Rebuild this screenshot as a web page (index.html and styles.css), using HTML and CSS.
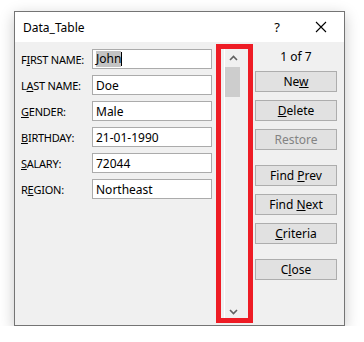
FILE: index.html
```html
<!DOCTYPE html>
<html lang="en">
<head>
  <meta charset="UTF-8" />
  <title>Data_Table</title>
  <link rel="stylesheet" href="styles.css">
</head>
<body>
  <div class="dialog">
    <header class="titlebar">
      <span class="title">Data_Table</span>
      <span class="help">?</span>
      <svg class="close-x" width="12" height="12" viewBox="0 0 12 12">
        <path d="M1 1 L11 11 M11 1 L1 11" stroke="#000" stroke-width="1.1" fill="none"/>
      </svg>
    </header>

    <section class="form-body">
      <div class="fields">
        <div class="field-row">
          <label>F<u>I</u>RST NAME:</label>
          <div class="textbox"><span class="selected">John</span><span class="caret"></span></div>
        </div>
        <div class="field-row">
          <label>L<u>A</u>ST NAME:</label>
          <div class="textbox">Doe</div>
        </div>
        <div class="field-row">
          <label><u>G</u>ENDER:</label>
          <div class="textbox">Male</div>
        </div>
        <div class="field-row">
          <label><u>B</u>IRTHDAY:</label>
          <div class="textbox">21-01-1990</div>
        </div>
        <div class="field-row">
          <label><u>S</u>ALARY:</label>
          <div class="textbox">72044</div>
        </div>
        <div class="field-row">
          <label>R<u>E</u>GION:</label>
          <div class="textbox">Northeast</div>
        </div>
      </div>

      <div class="scroll-mark">
        <div class="scrollbar">
          <svg class="arrow arrow-up" width="9" height="6" viewBox="0 0 9 6">
            <path d="M1 5 L4.5 1.5 L8 5" stroke="#606060" stroke-width="1.6" fill="none"/>
          </svg>
          <div class="thumb"></div>
          <svg class="arrow arrow-down" width="9" height="6" viewBox="0 0 9 6">
            <path d="M1 1 L4.5 4.5 L8 1" stroke="#606060" stroke-width="1.6" fill="none"/>
          </svg>
        </div>
      </div>

      <div class="actions">
        <div class="record-count">1 of 7</div>
        <button>Ne<u>w</u></button>
        <button><u>D</u>elete</button>
        <button class="disabled">Restore</button>
        <button class="group-start">Find <u>P</u>rev</button>
        <button>Find <u>N</u>ext</button>
        <button><u>C</u>riteria</button>
        <button class="group-start">C<u>l</u>ose</button>
      </div>
    </section>
  </div>
</body>
</html>
```

FILE: styles.css
```css
body {
  margin: 0;
  background: #fff;
  font-family: 'Noto Sans', 'Segoe UI', sans-serif;
  font-size: 12px;
  color: #000;
}

.dialog {
  margin: 11px 0 0 14px;
  width: 331px;
  height: 315px;
  box-sizing: border-box;
  border: 1px solid #747474;
  background: #f0f0f0;
  box-shadow: 0 4px 14px rgba(0, 0, 0, 0.22);
  display: flex;
  flex-direction: column;
}

.titlebar {
  height: 30px;
  background: #fff;
  display: flex;
  align-items: center;
  padding-left: 8px;
}

.title {
  flex: 1;
  font-size: 12px;
}

.help {
  font-size: 13px;
  margin-right: 35px;
}

.close-x {
  margin-right: 17px;
}

.form-body {
  flex: 1;
  display: flex;
  align-items: flex-start;
}

.fields {
  width: 201px;
  padding: 7px 0 0 6px;
  box-sizing: border-box;
  display: flex;
  flex-direction: column;
  gap: 6px;
}

.field-row {
  display: flex;
  align-items: center;
  height: 20px;
}

.field-row label {
  width: 71px;
  flex-shrink: 0;
  white-space: nowrap;
  font-size: 11px;
  letter-spacing: -0.25px;
}

.textbox {
  width: 120px;
  height: 20px;
  box-sizing: border-box;
  border: 1px solid #ababab;
  background: #fff;
  padding-left: 3px;
  display: flex;
  align-items: center;
}

.selected {
  background: #c4c4c4;
  line-height: 16px;
}

.caret {
  width: 1px;
  height: 14px;
  background: #000;
}

.scroll-mark {
  margin-top: 2px;
  width: 37px;
  height: 279px;
  box-sizing: border-box;
  border: 5px solid #ee1c25;
  padding-left: 3px;
}

.scrollbar {
  width: 17px;
  height: 100%;
  box-sizing: border-box;
  border-left: 1px solid #fff;
  display: flex;
  flex-direction: column;
  align-items: center;
}

.arrow-up {
  margin-top: 6px;
}

.thumb {
  width: 15px;
  height: 30px;
  background: #cdcdcd;
  margin-top: 6px;
  margin-left: -1px;
}

.arrow-down {
  margin-top: auto;
  margin-bottom: 3px;
}

.actions {
  padding: 7px 0 0 2px;
  width: 82px;
  display: flex;
  flex-direction: column;
  gap: 8px;
}

.record-count {
  text-align: center;
  line-height: 16px;
  margin-bottom: -2px;
}

.actions button {
  height: 21px;
  padding: 0;
  font: inherit;
  color: #000;
  background: #e1e1e1;
  border: 1px solid #adadad;
}

.actions button.disabled {
  color: #838383;
}

.actions button.group-start {
  margin-top: 7px;
}
```
